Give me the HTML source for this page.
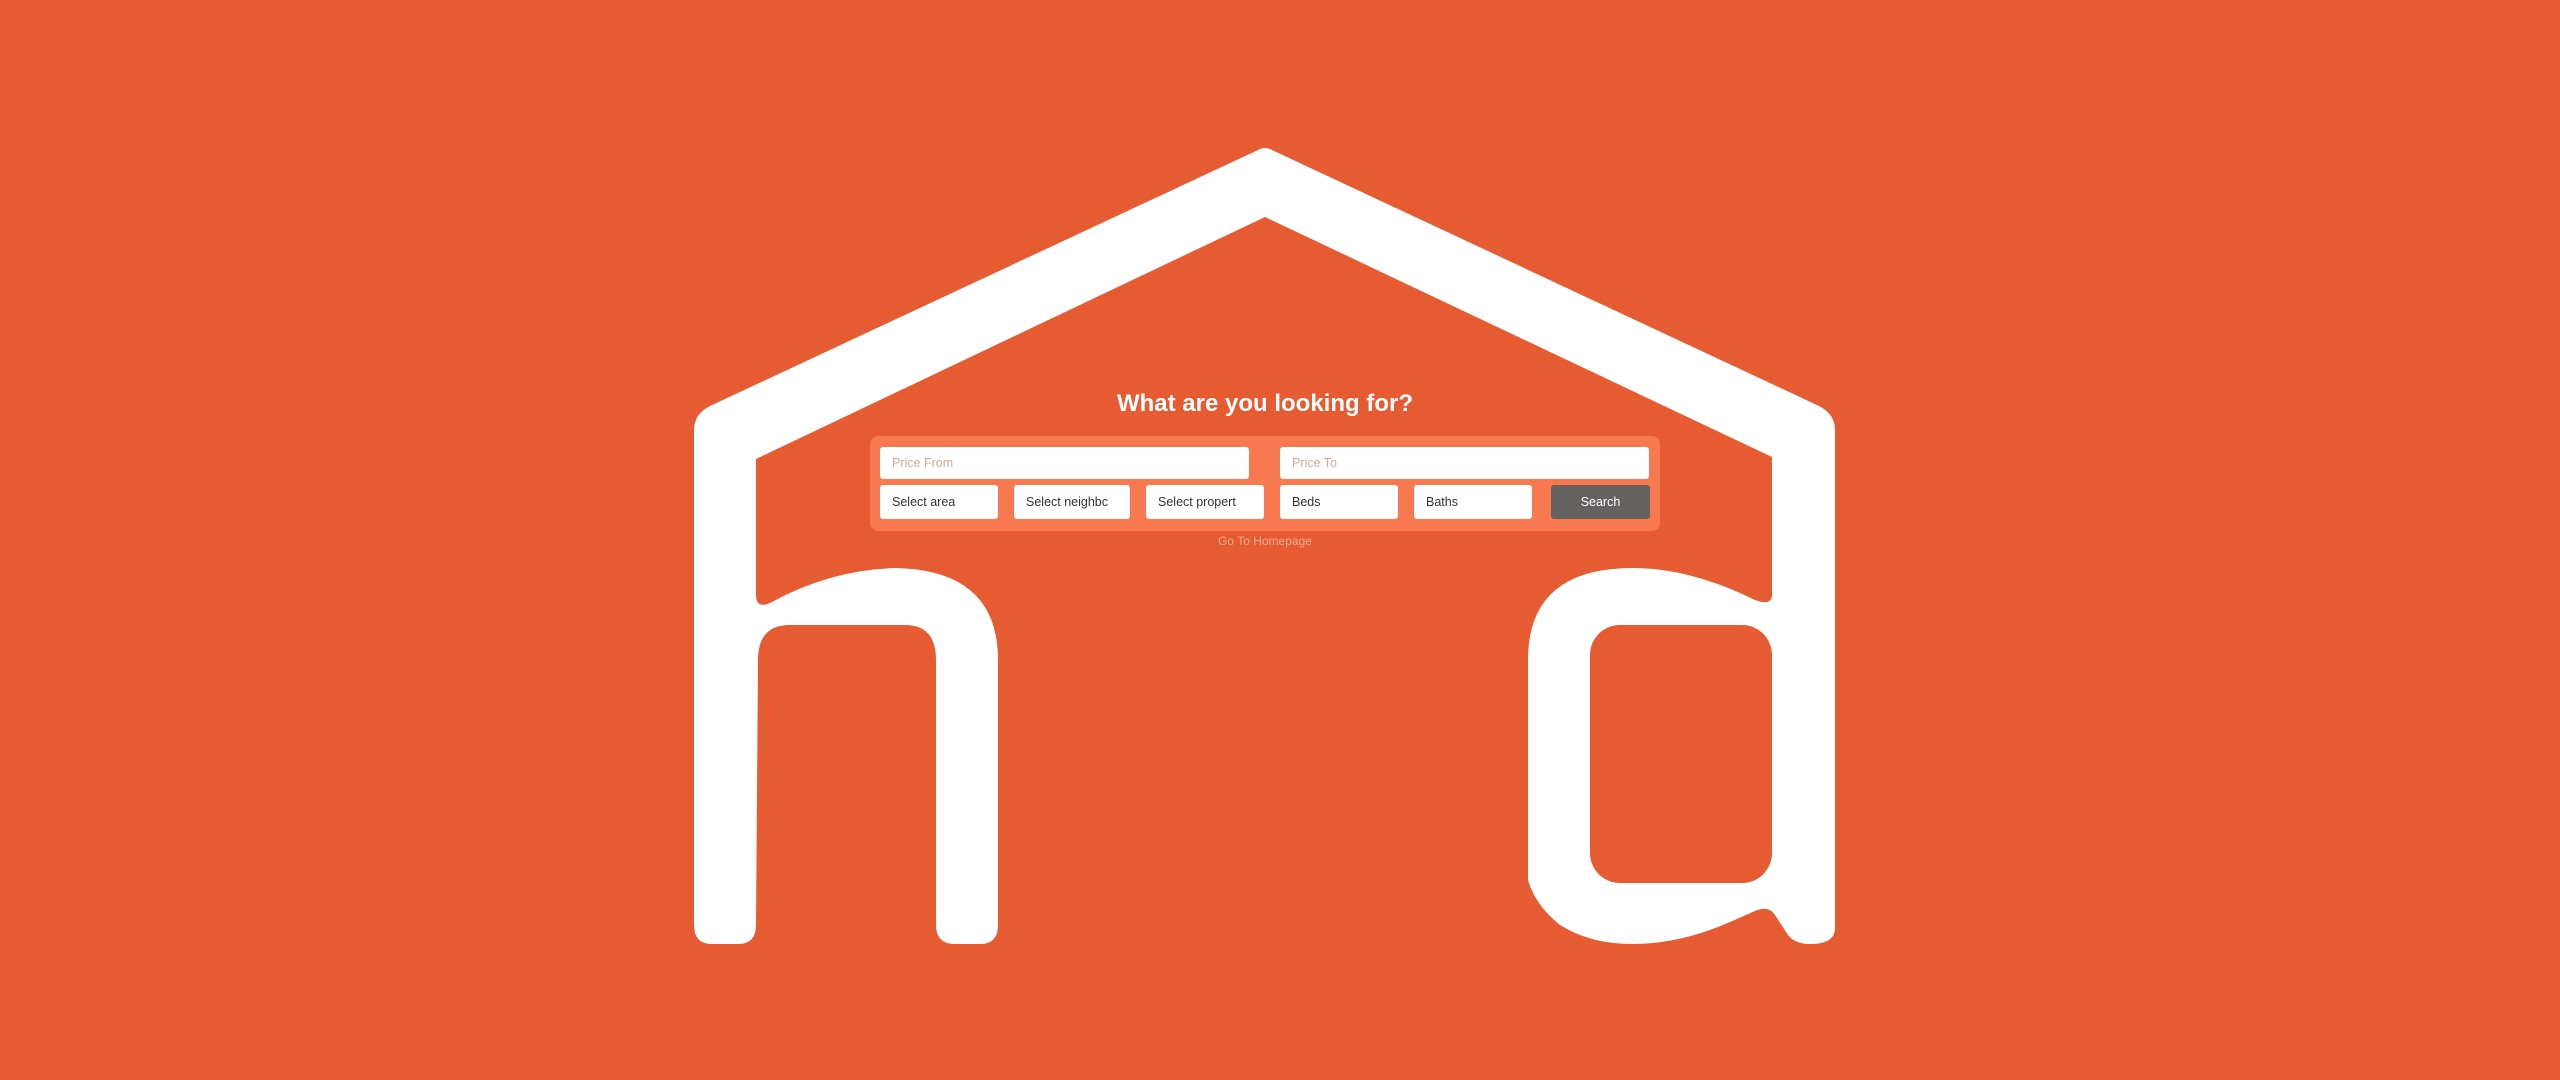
<!DOCTYPE html>
<html><head><meta charset="utf-8"><style>
html,body{margin:0;padding:0;width:2560px;height:1080px;overflow:hidden;background:#E65B31;font-family:"Liberation Sans",sans-serif}
svg{position:absolute;left:0;top:0}
.t{position:absolute;left:0;width:2530px;text-align:center;top:390px;color:#fff;font-size:24px;font-weight:bold}
.panel{position:absolute;left:870px;top:436px;width:790px;height:95px;background:#F87850;border-radius:8px}
.f{position:absolute;background:#fff;border-radius:3px;box-sizing:border-box;padding-left:12px;font-size:12.5px;color:#333;display:flex;align-items:center;overflow:hidden;white-space:nowrap}
.ph{color:#c9a89c}
.btn{background:#676262;color:#fff;justify-content:center;padding:0}
.l{position:absolute;left:0;width:2530px;text-align:center;top:534px;font-size:12px;color:#f5a98d}
</style></head><body>
<svg width="2560" height="1080" viewBox="0 0 2560 1080">
<path fill="#fff" d="M694,925 L694,430 Q694,414 710,406 L1258,150 Q1265,146 1272,150 L1819,406 Q1835,414 1835,430 L1835,928 Q1835,944 1810,944 Q1795,944 1788,935 L1775,915 Q1768,905 1755,911 L1730,922 Q1680,944 1633,944 Q1590,944 1560,925 Q1535,905 1528,880 L1528,660 Q1528,568 1633,568 Q1690,568 1755,600 Q1772,606 1772,595 L1772,457 L1265,217 L756,459 L756,595 Q756,610 772,602 Q830,570 895,568 Q998,570 998,660 L998,925 Q998,944 980,944 L955,944 Q936,944 936,925 L936,660 Q936,625 905,625 L790,625 Q758,625 758,660 L756,925 Q756,944 738,944 L712,944 Q694,944 694,925 Z"/>
<rect x="1590" y="625" width="182" height="258" rx="30" fill="#E65B31"/>
</svg>
<div class="t">What are you looking for?</div>
<div class="panel"></div>
<div class="f ph" style="left:880px;top:447px;width:369px;height:32px">Price From</div>
<div class="f ph" style="left:1280px;top:447px;width:369px;height:32px">Price To</div>
<div class="f" style="left:880px;top:485px;width:118px;height:34px">Select area</div>
<div class="f" style="left:1014px;top:485px;width:116px;height:34px">Select neighbc</div>
<div class="f" style="left:1146px;top:485px;width:118px;height:34px">Select propert</div>
<div class="f" style="left:1280px;top:485px;width:118px;height:34px">Beds</div>
<div class="f" style="left:1414px;top:485px;width:118px;height:34px">Baths</div>
<div class="f btn" style="left:1551px;top:485px;width:99px;height:34px">Search</div>
<div class="l">Go To Homepage</div>
</body></html>
